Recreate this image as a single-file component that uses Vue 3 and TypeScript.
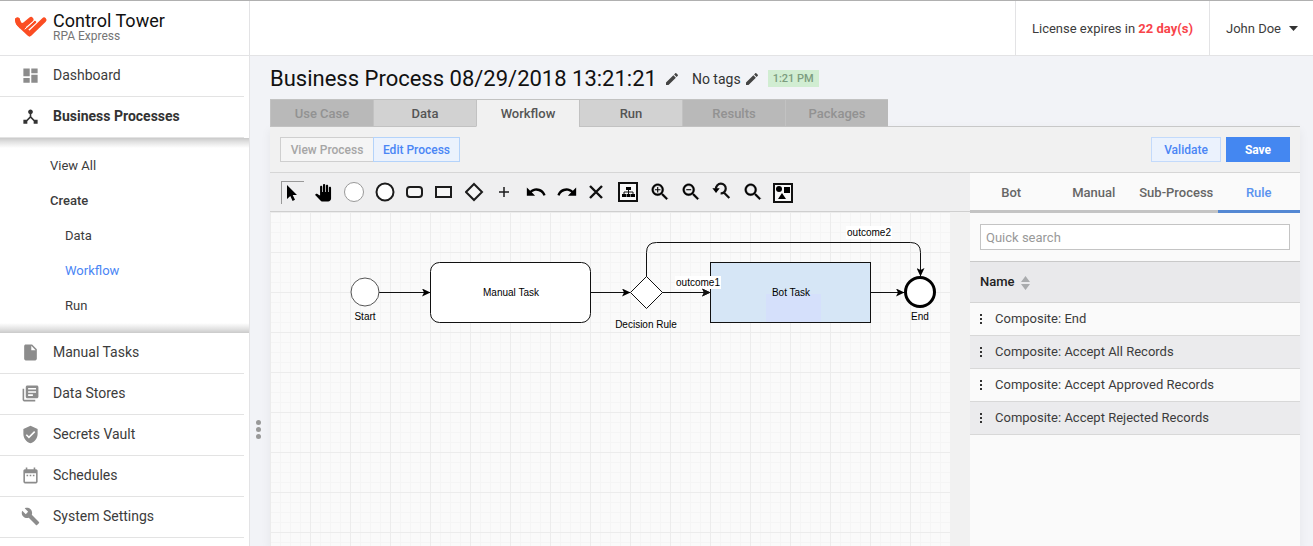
<script setup lang="ts">
import { ref } from 'vue'

interface NavItem {
  label: string
  icon: string
}

const topNav: NavItem[] = [
  { label: 'Dashboard', icon: 'M3 13h8V3H3v10zm0 8h8v-6H3v6zm10 0h8V11h-8v10zm0-18v6h8V3h-8z' },
  {
    label: 'Business Processes',
    icon: 'M17 16l-4-4V8.82C14.16 8.4 15 7.3 15 6c0-1.66-1.34-3-3-3S9 4.34 9 6c0 1.3.84 2.4 2 2.82V12l-4 4H3v5h5v-3.05l4-4.2 4 4.2V21h5v-5h-4z',
  },
]

const bottomNav: NavItem[] = [
  {
    label: 'Manual Tasks',
    icon: 'M6 2c-1.1 0-1.99.9-1.99 2L4 20c0 1.1.89 2 1.99 2H18c1.1 0 2-.9 2-2V8l-6-6H6zm7 7V3.5L18.5 9H13z',
  },
  {
    label: 'Data Stores',
    icon: 'M4 6H2v14c0 1.1.9 2 2 2h14v-2H4V6zm16-4H8c-1.1 0-2 .9-2 2v12c0 1.1.9 2 2 2h12c1.1 0 2-.9 2-2V4c0-1.1-.9-2-2-2zm-1 9H9V9h10v2zm-4 4H9v-2h6v2zm4-8H9V5h10v2z',
  },
  {
    label: 'Secrets Vault',
    icon: 'M12 1L3 5v6c0 5.55 3.84 10.74 9 12 5.16-1.26 9-6.45 9-12V5l-9-4zm-2 16l-4-4 1.41-1.41L10 14.17l6.59-6.59L18 9l-8 8z',
  },
  {
    label: 'Schedules',
    icon: 'M9 11H7v2h2v-2zm4 0h-2v2h2v-2zm4 0h-2v2h2v-2zm2-7h-1V2h-2v2H8V2H6v2H5c-1.11 0-1.99.9-1.99 2L3 20c0 1.1.89 2 2 2h14c1.1 0 2-.9 2-2V6c0-1.1-.9-2-2-2zm0 16H5V9h14v11z',
  },
  {
    label: 'System Settings',
    icon: 'M22.7 19l-9.1-9.1c.9-2.3.4-5-1.5-6.9-2-2-5-2.4-7.4-1.3L9 6 6 9 1.6 4.7C.4 7.1.9 10.1 2.9 12.1c1.9 1.9 4.6 2.4 6.9 1.5l9.1 9.1c.4.4 1 .4 1.4 0l2.3-2.3c.5-.4.5-1.1.1-1.4z',
  },
]

const subNav = [
  { label: 'View All', kind: '' },
  { label: 'Create', kind: 'strong' },
  { label: 'Data', kind: 'child' },
  { label: 'Workflow', kind: 'child current' },
  { label: 'Run', kind: 'child' },
]

const pencil =
  'M3 17.25V21h3.75L17.81 9.94l-3.75-3.75L3 17.25zM20.71 7.04c.39-.39.39-1.02 0-1.41l-2.34-2.34c-.39-.39-1.02-.39-1.41 0l-1.83 1.83 3.75 3.75 1.83-1.83z'

const tabs = [
  { label: 'Use Case', disabled: true },
  { label: 'Data', disabled: false },
  { label: 'Workflow', disabled: false },
  { label: 'Run', disabled: false },
  { label: 'Results', disabled: true },
  { label: 'Packages', disabled: true },
]
const activeTab = ref('Workflow')

const tools = [
  { id: 'select', title: 'Select' },
  { id: 'pan', title: 'Pan' },
  { id: 'start', title: 'Start event' },
  { id: 'end', title: 'End event' },
  { id: 'manual', title: 'Manual task', slim: true },
  { id: 'bot', title: 'Bot task', slim: true },
  { id: 'rule', title: 'Decision rule', slim: true },
  { id: 'add', title: 'Add', slim: true },
  { id: 'undo', title: 'Undo' },
  { id: 'redo', title: 'Redo' },
  { id: 'delete', title: 'Delete' },
  { id: 'layout', title: 'Layout' },
  { id: 'zoomIn', title: 'Zoom in' },
  { id: 'zoomOut', title: 'Zoom out' },
  { id: 'zoomReset', title: 'Reset zoom' },
  { id: 'zoomFit', title: 'Fit' },
  { id: 'shapes', title: 'Shapes' },
]
const activeTool = ref('select')

const sideTabs = ['Bot', 'Manual', 'Sub-Process', 'Rule']
const activeSide = ref('Rule')
const query = ref('')
const rules = [
  'Composite: End',
  'Composite: Accept All Records',
  'Composite: Accept Approved Records',
  'Composite: Accept Rejected Records',
]

const lens =
  'M15.5 14h-.79l-.28-.27C15.41 12.59 16 11.11 16 9.5 16 5.91 13.09 3 9.5 3S3 5.91 3 9.5 5.91 16 9.5 16c1.61 0 3.09-.59 4.23-1.57l.27.28v.79l5 4.99L20.49 19l-4.99-5zm-6 0C7.01 14 5 11.99 5 9.5S7.01 5 9.5 5 14 7.01 14 9.5 11.99 14 9.5 14z'
</script>

<template>
  <div class="page">
    <header class="top">
      <div class="brand">
        <svg class="logo" viewBox="0 0 34 22" aria-hidden="true">
          <g fill="none" stroke="#fb4d23" stroke-width="5" stroke-linecap="round" stroke-linejoin="round">
            <path d="M3.500 4C3.800 7.500 6 9 8 11L15.500 18L30 4" />
            <path d="M3.500 4C4 9 8 11 11 8.500L17 3.500" />
          </g>
          <path d="M11.500 14.500L21 6" fill="none" stroke="#fb4d23" stroke-width="2.500" stroke-linecap="round" />
          <path d="M11 13L19.500 5.500" fill="none" stroke="#fff" stroke-width="1" stroke-linecap="round" />
        </svg>
        <div class="brand-text">
          <span class="brand-name">Control Tower</span>
          <span class="brand-sub">RPA Express</span>
        </div>
      </div>
      <div class="license">License expires in <b>22 day(s)</b></div>
      <button class="user" type="button">
        John Doe
        <svg width="9" height="5" viewBox="0 0 9 5" aria-hidden="true"><path d="M0 0h9L4.500 5z" fill="#333" /></svg>
      </button>
    </header>

    <div class="body">
      <nav class="side">
        <a v-for="n in topNav" :key="n.label" href="#" class="nav" :class="{ on: n.label === 'Business Processes' }">
          <svg viewBox="0 0 24 24" aria-hidden="true"><path :d="n.icon" /></svg>{{ n.label }}
        </a>
        <div class="sub">
          <a v-for="s in subNav" :key="s.label" href="#" :class="s.kind">{{ s.label }}</a>
        </div>
        <a v-for="n in bottomNav" :key="n.label" href="#" class="nav">
          <svg viewBox="0 0 24 24" aria-hidden="true"><path :d="n.icon" /></svg>{{ n.label }}
        </a>
      </nav>

      <div class="gutter" role="separator" aria-orientation="vertical"><i /><i /><i /></div>

      <main class="main">
        <div class="title-row">
          <h1>Business Process 08/29/2018 13:21:21</h1>
          <button class="edit rename" type="button" aria-label="Rename"><svg viewBox="0 0 24 24"><path :d="pencil" /></svg></button>
          <span class="tags">No tags</span>
          <button class="edit" type="button" aria-label="Edit tags"><svg viewBox="0 0 24 24"><path :d="pencil" /></svg></button>
          <span class="badge">1:21 PM</span>
        </div>

        <div class="tabs" role="tablist">
          <button
            v-for="t in tabs"
            :key="t.label"
            type="button"
            role="tab"
            :disabled="t.disabled"
            :class="{ on: t.label === activeTab }"
            :aria-selected="t.label === activeTab"
            @click="activeTab = t.label"
          >
            {{ t.label }}
          </button>
        </div>

        <section class="panel">
          <div class="actions">
            <button class="mode view" type="button">View Process</button>
            <button class="mode editing" type="button">Edit Process</button>
            <span class="space" />
            <button class="validate" type="button">Validate</button>
            <button class="save" type="button">Save</button>
          </div>

          <div class="work">
            <div class="editor">
              <div class="tools">
                <button
                  v-for="t in tools"
                  :key="t.id"
                  type="button"
                  class="tool"
                  :class="{ slim: t.slim, on: t.id === activeTool }"
                  :aria-label="t.title"
                  @click="activeTool = t.id"
                >
                  <svg v-if="t.id === 'select'" viewBox="0 0 22 22"><path d="M5 3v14l3.300-3.100 2.300 5 2.400-1.100-2.300-4.900H15z" /></svg>
                  <svg v-else-if="t.id === 'pan'" viewBox="-3 -4 30 30">
                    <path d="M23 5.500V20c0 2.200-1.800 4-4 4h-7.300c-1.080 0-2.100-.43-2.850-1.190L1 14.830s1.260-1.230 1.300-1.250c.22-.19.49-.29.79-.29.22 0 .42.06.6.16.04.01 4.310 2.460 4.310 2.460V4c0-.83.67-1.500 1.500-1.500S11 3.170 11 4v7h1V1.500c0-.83.67-1.500 1.500-1.500S15 .67 15 1.500V11h1V2.500c0-.83.67-1.500 1.500-1.500s1.500.67 1.500 1.500V11h1V5.500c0-.83.67-1.500 1.500-1.500s1.500.67 1.500 1.500z" />
                  </svg>
                  <svg v-else-if="t.id === 'start'" viewBox="0 0 22 22"><circle cx="11" cy="11" r="9.500" fill="#fff" stroke="#999" /></svg>
                  <svg v-else-if="t.id === 'end'" viewBox="0 0 22 22"><circle cx="11" cy="11" r="8.500" fill="#fff" stroke="#1c1c1c" stroke-width="2" /></svg>
                  <svg v-else-if="t.id === 'manual'" viewBox="0 0 22 22"><rect x="2" y="6" width="15" height="10" rx="3" fill="#f6f6f6" stroke="#1c1c1c" stroke-width="2" /></svg>
                  <svg v-else-if="t.id === 'bot'" viewBox="0 0 22 22"><rect x="1" y="6" width="15" height="10" fill="#f6f6f6" stroke="#1c1c1c" stroke-width="2" /></svg>
                  <svg v-else-if="t.id === 'rule'" viewBox="0 0 22 22"><path d="M9 3l8 8-8 8-8-8z" fill="#f6f6f6" stroke="#1c1c1c" stroke-width="2" /></svg>
                  <svg v-else-if="t.id === 'add'" viewBox="0 0 22 22"><path d="M4 11h10M9 6v10" fill="none" stroke="#1c1c1c" stroke-width="1.500" /></svg>
                  <svg v-else-if="t.id === 'undo'" viewBox="0 0 24 24">
                    <path d="M12.500 8c-2.650 0-5.050.99-6.900 2.600L2 7v9h9l-3.620-3.620c1.390-1.160 3.160-1.880 5.120-1.880 3.540 0 6.550 2.310 7.600 5.500l2.370-.78C21.080 11.030 17.150 8 12.500 8z" />
                  </svg>
                  <svg v-else-if="t.id === 'redo'" viewBox="0 0 24 24">
                    <path d="M18.400 10.600C16.550 8.990 14.150 8 11.500 8c-4.650 0-8.580 3.030-9.960 7.220L3.900 16c1.050-3.190 4.050-5.500 7.600-5.500 1.950 0 3.730.72 5.120 1.880L13 16h9V7l-3.600 3.600z" />
                  </svg>
                  <svg v-else-if="t.id === 'delete'" viewBox="0 0 22 22"><path d="M3 5l12 12M15 5L3 17" fill="none" stroke="#111" stroke-width="2.400" /></svg>
                  <svg v-else-if="t.id === 'layout'" viewBox="0 0 22 22">
                    <rect x="1" y="2" width="18" height="18" fill="#f8f8f8" stroke="#111" stroke-width="2" />
                    <path d="M8 6h5v3H8zM4 13h4v3H4zM8.500 13h4v3h-4zM13 13h4v3h-4z" />
                    <path d="M10.500 9v4M6 13v-2h9v2" fill="none" stroke="#111" />
                  </svg>
                  <svg v-else-if="t.id === 'zoomIn'" viewBox="0 0 24 24"><path :d="lens" stroke="#111" stroke-width=".4" /><path d="M12.500 10.100h-2.400v2.400H8.900v-2.400H6.500V8.900h2.400V6.500h1.200v2.400h2.400z" /></svg>
                  <svg v-else-if="t.id === 'zoomOut'" viewBox="0 0 24 24"><path :d="lens" stroke="#111" stroke-width=".4" /><path d="M6.800 8.900h5.400v1.200H6.800z" /></svg>
                  <svg v-else-if="t.id === 'zoomReset'" viewBox="0 0 24 24">
                    <path d="M5.500 8.500A5.300 5.300 0 1 1 10.500 13.500M14 12.500L20 18.500" fill="none" stroke="#111" stroke-width="2.400" />
                    <path d="M1.500 8h8L5.500 13z" />
                  </svg>
                  <svg v-else-if="t.id === 'zoomFit'" viewBox="0 0 24 24"><path :d="lens" stroke="#111" stroke-width=".4" /></svg>
                  <svg v-else viewBox="0 0 22 22">
                    <rect x="1" y="3" width="18" height="18" fill="#f8f8f8" stroke="#111" stroke-width="2" />
                    <circle cx="6" cy="8" r="3" /><path d="M11 6h6v6h-6zM9 12l4 6H5z" />
                  </svg>
                </button>
              </div>

              <div class="canvas-wrap">
                <svg class="canvas" role="img" aria-label="Process diagram">
                  <defs>
                    <pattern id="grid" width="40" height="40" patternUnits="userSpaceOnUse">
                      <path d="M10.500 0v40M20.500 0v40M30.500 0v40M0 10.500h40M0 20.500h40M0 30.500h40" stroke="#f5f5f5" />
                      <path d="M.5 0v40M0 .5h40" stroke="#ececec" />
                    </pattern>
                    <marker id="arrow" markerWidth="9" markerHeight="8" refX="8" refY="4" orient="auto" markerUnits="userSpaceOnUse">
                      <path d="M0 0l8.500 4L0 8l2-4z" />
                    </marker>
                  </defs>
                  <rect width="100%" height="100%" fill="url(#grid)" />

                  <g fill="none" stroke="#111" marker-end="url(#arrow)">
                    <path d="M109 80.500H160" />
                    <path d="M321 80.500H360" />
                    <path d="M392 80.500H440" />
                    <path d="M601 80.500H634" />
                    <path d="M376.500 65V40.500Q376.500 30.500 386.500 30.500H640.500Q650.500 30.500 650.500 40.500V64" />
                  </g>

                  <circle cx="95" cy="80" r="14" fill="#fff" stroke="#555" />
                  <rect x="160.500" y="50.500" width="160" height="60" rx="9" fill="#fff" stroke="#111" />
                  <path d="M376.500 64.500l16 16-16 16-16-16z" fill="#fff" stroke="#111" />
                  <rect x="440.500" y="50.500" width="160" height="60" fill="#d6e6f6" />
                  <rect x="496" y="82" width="55" height="28" fill="#d5e0fb" />
                  <rect x="440.500" y="50.500" width="160" height="60" fill="none" stroke="#111" />
                  <circle cx="650" cy="80" r="14.500" fill="#fff" stroke="#000" stroke-width="3" />

                  <rect x="405" y="64" width="46" height="13" fill="#fff" />
                  <rect x="576" y="14" width="46" height="13" fill="#fff" />
                  <path d="M432 76.500l8.500 4-8.500 4 2-4z" fill="#111" />

                  <g class="labels">
                    <text x="95" y="108">Start</text>
                    <text x="241" y="84">Manual Task</text>
                    <text x="376" y="116">Decision Rule</text>
                    <text x="428" y="74">outcome1</text>
                    <text x="521" y="84">Bot Task</text>
                    <text x="599" y="24">outcome2</text>
                    <text x="650" y="108">End</text>
                  </g>
                </svg>
              </div>
            </div>

            <aside class="library">
              <div class="side-tabs" role="tablist">
                <button
                  v-for="s in sideTabs"
                  :key="s"
                  type="button"
                  role="tab"
                  :class="{ on: s === activeSide }"
                  :aria-selected="s === activeSide"
                  @click="activeSide = s"
                >
                  {{ s }}
                </button>
              </div>
              <div class="search"><input v-model="query" type="text" placeholder="Quick search" aria-label="Quick search" /></div>
              <table>
                <thead>
                  <tr>
                    <th scope="col">
                      Name
                      <svg class="sort" viewBox="0 0 9 14" aria-hidden="true"><path d="M0 6l4.500-6L9 6zM0 8h9l-4.500 6z" fill="#a9abad" /></svg>
                    </th>
                  </tr>
                </thead>
                <tbody>
                  <tr v-for="r in rules" :key="r">
                    <td>
                      <svg class="dots" viewBox="0 0 4 10" aria-hidden="true"><path d="M1 0h2v2H1zM1 4h2v2H1zM1 8h2v2H1z" fill="#333" /></svg>{{ r }}
                    </td>
                  </tr>
                </tbody>
              </table>
            </aside>
          </div>
        </section>
      </main>
    </div>
  </div>
</template>

<style>
body {
  margin: 0;
}
</style>

<style scoped>
.page {
  display: flex;
  flex-direction: column;
  min-height: 100vh;
  box-sizing: border-box;
  border-top: 1px solid #b0b0b0;
  background: #f2f3f7;
  font-family: Roboto, sans-serif;
  font-size: 13px;
  color: #3c3c3c;
}
button {
  margin: 0;
  padding: 0;
  border: 0;
  background: none;
  font: inherit;
  color: inherit;
}
a {
  color: inherit;
  text-decoration: none;
}
.top {
  display: flex;
  height: 54px;
  background: #fff;
  border-bottom: 1px solid #e3e3e5;
}
.brand {
  flex: none;
  display: flex;
  align-items: center;
  gap: 5px;
  width: 250px;
  box-sizing: border-box;
  padding: 0 0 2px 14px;
  margin-right: auto;
  border-right: 1px solid #e3e3e5;
}
.logo {
  width: 34px;
  height: 22px;
}
.brand-text {
  display: flex;
  flex-direction: column;
}
.brand-name {
  font-size: 18px;
  line-height: 18px;
  font-weight: 400;
  color: #111;
}
.brand-sub {
  font-size: 12px;
  line-height: 12px;
  color: #757575;
}
.license,
.user {
  display: flex;
  align-items: center;
  padding: 0 16px;
  border-left: 1px solid #e3e3e5;
  white-space: nowrap;
}
.license {
  white-space: pre;
}
.license b {
  font-weight: 700;
  color: #f8444a;
}
.user {
  gap: 8px;
  padding-right: 15px;
}
.body {
  flex: 1;
  display: flex;
}
.side {
  flex: none;
  width: 249px;
  background: #fff;
  border-right: 1px solid #e3e3e5;
}
.nav {
  display: flex;
  align-items: center;
  gap: 13px;
  height: 38px;
  margin-right: 5px;
  padding: 0 0 2px 21px;
  border-bottom: 1px solid #e3e3e3;
  font-size: 14px;
}
.nav svg {
  width: 19px;
  height: 19px;
  fill: #8c8c8c;
}
.nav.on {
  font-weight: 700;
  color: #333;
}
.nav.on svg {
  fill: #333;
}
.sub {
  padding: 10px 0;
  background:
    linear-gradient(#cacaca, #e2e2e2 4px, #fff 10px) top / 100% 10px no-repeat,
    linear-gradient(#fff, #e2e2e2 6px, #cacaca 10px) bottom / 100% 10px no-repeat;
}
.sub a {
  display: block;
  padding-left: 50px;
  line-height: 35px;
}
.sub .child {
  padding-left: 65px;
}
.sub .strong {
  font-weight: 500;
}
.sub .current {
  color: #4a86f5;
}
.gutter {
  flex: none;
  width: 20px;
  box-sizing: border-box;
  padding: 364px 9px 0 6px;
  display: flex;
  flex-direction: column;
  gap: 2px;
}
.gutter i {
  width: 5px;
  height: 5px;
  border-radius: 50%;
  background: #999;
}
.main {
  flex: 1;
  min-width: 0;
  display: flex;
  flex-direction: column;
  padding-right: 13px;
}
.title-row {
  display: flex;
  align-items: center;
  height: 41px;
  padding-top: 2px;
}
h1 {
  margin: 0;
  font-size: 22px;
  font-weight: 400;
  color: #111;
}
.edit {
  width: 16px;
  height: 16px;
  margin-left: 3px;
}
.edit.rename {
  margin-left: 7px;
}
.edit svg {
  display: block;
  width: 16px;
  height: 16px;
  fill: #444;
}
.tags {
  margin-left: 12px;
  font-size: 14px;
  color: #333;
}
.badge {
  margin-left: 8px;
  padding: 0 5px;
  font-size: 11px;
  line-height: 17px;
  font-weight: 500;
  color: #7c9c7f;
  background: #d1edd2;
}
.tabs {
  display: flex;
  position: relative;
  margin-bottom: -1px;
}
.tabs button {
  width: 103px;
  height: 28px;
  border: 1px solid #c2c2c2;
  border-right-width: 0;
  background: #d2d2d2;
  font-weight: 500;
  color: #555;
}
.tabs button:disabled {
  background: #b9b9b9;
  color: #929292;
}
.tabs .on {
  background: #f1f1f1;
  border-bottom-color: #f1f1f1;
}
.panel {
  flex: 1;
  display: flex;
  flex-direction: column;
  background: #f1f1f1;
  border-top: 1px solid #c8c8c8;
  box-shadow: 0 4px 10px rgba(0, 0, 0, 0.06);
}
.actions {
  display: flex;
  align-items: center;
  height: 45px;
  padding: 0 10px;
  border-bottom: 1px solid #d6d6d6;
}
.actions button {
  box-sizing: border-box;
  height: 25px;
  font-size: 12px;
  font-weight: 500;
}
.mode.view {
  width: 93px;
  border: 1px solid #cfcfcf;
  border-right: 0;
  background: #f5f5f5;
  color: #a6a6a6;
}
.mode.editing {
  width: 87px;
  border: 1px solid #b4d3fa;
  background: #ebf2fd;
  color: #4a86f5;
}
.space {
  flex: 1;
}
.actions .validate {
  width: 70px;
  margin-right: 5px;
  border: 1px solid #c3dafb;
  background: #ebf2fd;
  color: #4a86f5;
}
.actions .save {
  width: 64px;
  background: #4487f1;
  color: #fff;
  font-weight: 700;
}
.work {
  flex: 1;
  display: flex;
}
.editor {
  flex: 1;
  min-width: 0;
  display: flex;
  flex-direction: column;
}
.tools {
  display: flex;
  align-items: center;
  gap: 8px;
  height: 38px;
  padding-left: 11px;
  background: #efeff0;
  border-bottom: 1px solid #cfcfcf;
}
.tool {
  flex: none;
  box-sizing: border-box;
  width: 23px;
  height: 23px;
}
.tool.slim {
  width: 22px;
}
.tool.on {
  border-top: 1px solid #999;
  border-left: 1px solid #999;
}
.tool svg {
  display: block;
  width: 22px;
  height: 22px;
  fill: #000;
}
.canvas-wrap {
  flex: 1;
  display: flex;
  padding-right: 20px;
}
.canvas {
  flex: 1;
  min-width: 0;
  height: auto;
  background: #fafafa;
}
.labels text {
  font-family: 'Liberation Sans', sans-serif;
  font-size: 10px;
  text-anchor: middle;
  fill: #000;
}
.library {
  flex: none;
  width: 330px;
  background: #fafafa;
}
.side-tabs {
  display: flex;
}
.side-tabs button {
  flex: 1 1 0;
  height: 40px;
  padding-top: 2px;
  border-bottom: 3px solid #c4c4c4;
  font-weight: 500;
  color: #666;
}
.side-tabs .on {
  border-bottom-color: #5488d3;
  color: #5b93ef;
}
.search {
  padding: 11px 10px;
}
.search input {
  display: block;
  width: 100%;
  height: 26px;
  box-sizing: border-box;
  padding: 0 5px;
  border: 1px solid #c4c4c4;
  background: #fff;
  font: inherit;
  color: #333;
}
.search input::placeholder {
  color: #999;
  opacity: 1;
}
table {
  width: 100%;
  border-collapse: separate;
  border-spacing: 0;
}
th {
  height: 40px;
  padding: 0 10px;
  border-top: 1px solid #c9c9c9;
  border-bottom: 1px solid #d4d4d4;
  background: #e9e9eb;
  text-align: left;
  font-weight: 500;
  color: #222;
}
td {
  height: 30px;
  padding: 0 9px 2px;
  border-bottom: 1px solid #d8d8d8;
}
tr:nth-child(even) td {
  background: #ebebed;
}
.sort {
  width: 9px;
  height: 14px;
  margin-left: 3px;
  vertical-align: middle;
}
.dots {
  width: 4px;
  height: 10px;
  margin-right: 12px;
  vertical-align: middle;
}
</style>
